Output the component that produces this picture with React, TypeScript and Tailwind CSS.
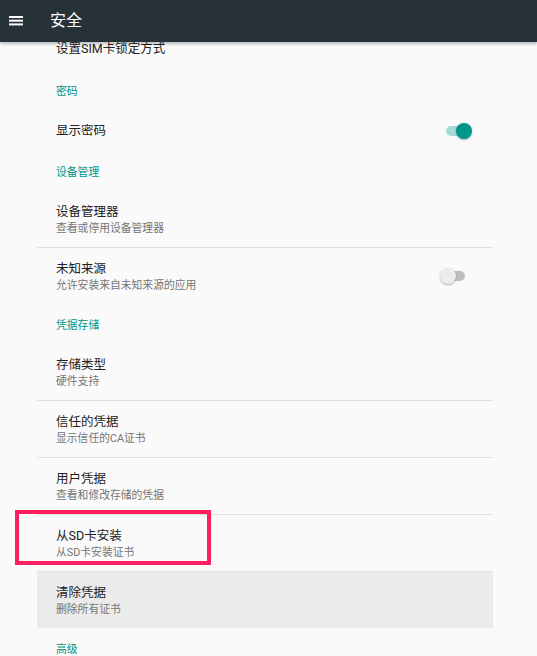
import React from "react";

const font = { fontFamily: 'Roboto, "Noto Sans CJK SC", sans-serif' };

function Header({ text }: { text: string }) {
  return (
    <div className="h-[40px] flex items-center pl-[19px] pt-[4px]">
      <span className="text-[10.8px] leading-[16px] text-[#009688]">{text}</span>
    </div>
  );
}

function Row2({ title, sub, highlight }: { title: string; sub: string; highlight?: boolean }) {
  return (
    <div className={`h-[56px] pl-[19px] pt-[13px] ${highlight ? "bg-[#ebebeb]" : ""}`}>
      <div className="text-[12.5px] leading-[16px] text-[#212121]">{title}</div>
      <div className="text-[10.8px] leading-[16px] mt-[1px] text-[#757575]">{sub}</div>
    </div>
  );
}

function Divider() {
  return <div className="h-px bg-[#e0e0e0]" />;
}

export default function App() {
  return (
    <div className="w-[537px] h-[656px] overflow-hidden bg-[#fafafa] relative" style={font}>
      <div className="relative z-10 h-[42px] bg-[#263238] flex items-center shadow-[0_2px_3px_rgba(0,0,0,0.25)]">
        <svg className="ml-[9px]" width="14" height="10" viewBox="0 0 14 10">
          <rect x="0" y="0" width="14" height="2" fill="#ffffff" />
          <rect x="0" y="3.7" width="14" height="2" fill="#ffffff" />
          <rect x="0" y="7.4" width="14" height="2" fill="#ffffff" />
        </svg>
        <span className="ml-[27px] text-[16px] leading-[20px] text-white">安全</span>
      </div>

      <div className="-mt-[13px] ml-[37px] w-[456px]">
        <div className="h-[41px] pl-[19px] flex items-center pb-[1px]">
          <span className="text-[12.5px] leading-[16px] text-[#212121]">设置SIM卡锁定方式</span>
        </div>
        <Header text="密码" />
        <div className="h-[41px] pl-[19px] flex items-center justify-between">
          <span className="text-[12.5px] leading-[16px] text-[#212121] pt-px">显示密码</span>
          <div className="relative w-[26px] h-[16px] mr-[21px]">
            <div className="absolute left-0 top-[3px] w-[24px] h-[10px] rounded-full bg-[#a7d9d4]" />
            <div className="absolute left-[10px] top-0 w-[16px] h-[16px] rounded-full bg-[#009688] shadow-[0_1px_2px_rgba(0,0,0,0.3)]" />
          </div>
        </div>
        <Header text="设备管理" />
        <Row2 title="设备管理器" sub="查看或停用设备管理器" />
        <Divider />
        <div className="h-[56px] pl-[19px] flex items-center justify-between">
          <div className="pt-[3px]">
            <div className="text-[12.5px] leading-[16px] text-[#212121]">未知来源</div>
            <div className="text-[10.8px] leading-[16px] mt-[1px] text-[#757575]">允许安装来自未知来源的应用</div>
          </div>
          <div className="relative w-[26px] h-[16px] mr-[27px]">
            <div className="absolute left-[1px] top-[3px] w-[24px] h-[10px] rounded-full bg-[#bdbdbd]" />
            <div className="absolute left-0 top-0 w-[16px] h-[16px] rounded-full bg-[#ececec] shadow-[0_1px_2px_rgba(0,0,0,0.3)]" />
          </div>
        </div>
        <Header text="凭据存储" />
        <Row2 title="存储类型" sub="硬件支持" />
        <Divider />
        <Row2 title="信任的凭据" sub="显示信任的CA证书" />
        <Divider />
        <Row2 title="用户凭据" sub="查看和修改存储的凭据" />
        <Divider />
        <Row2 title="从SD卡安装" sub="从SD卡安装证书" />
        <div className="h-px bg-[#e6e6e6]" />
        <Row2 title="清除凭据" sub="删除所有证书" highlight />
        <Header text="高级" />
      </div>

      <div className="absolute left-[15px] top-[510px] w-[196px] h-[55px] border-[4px] border-[#fd2060]" />
    </div>
  );
}
